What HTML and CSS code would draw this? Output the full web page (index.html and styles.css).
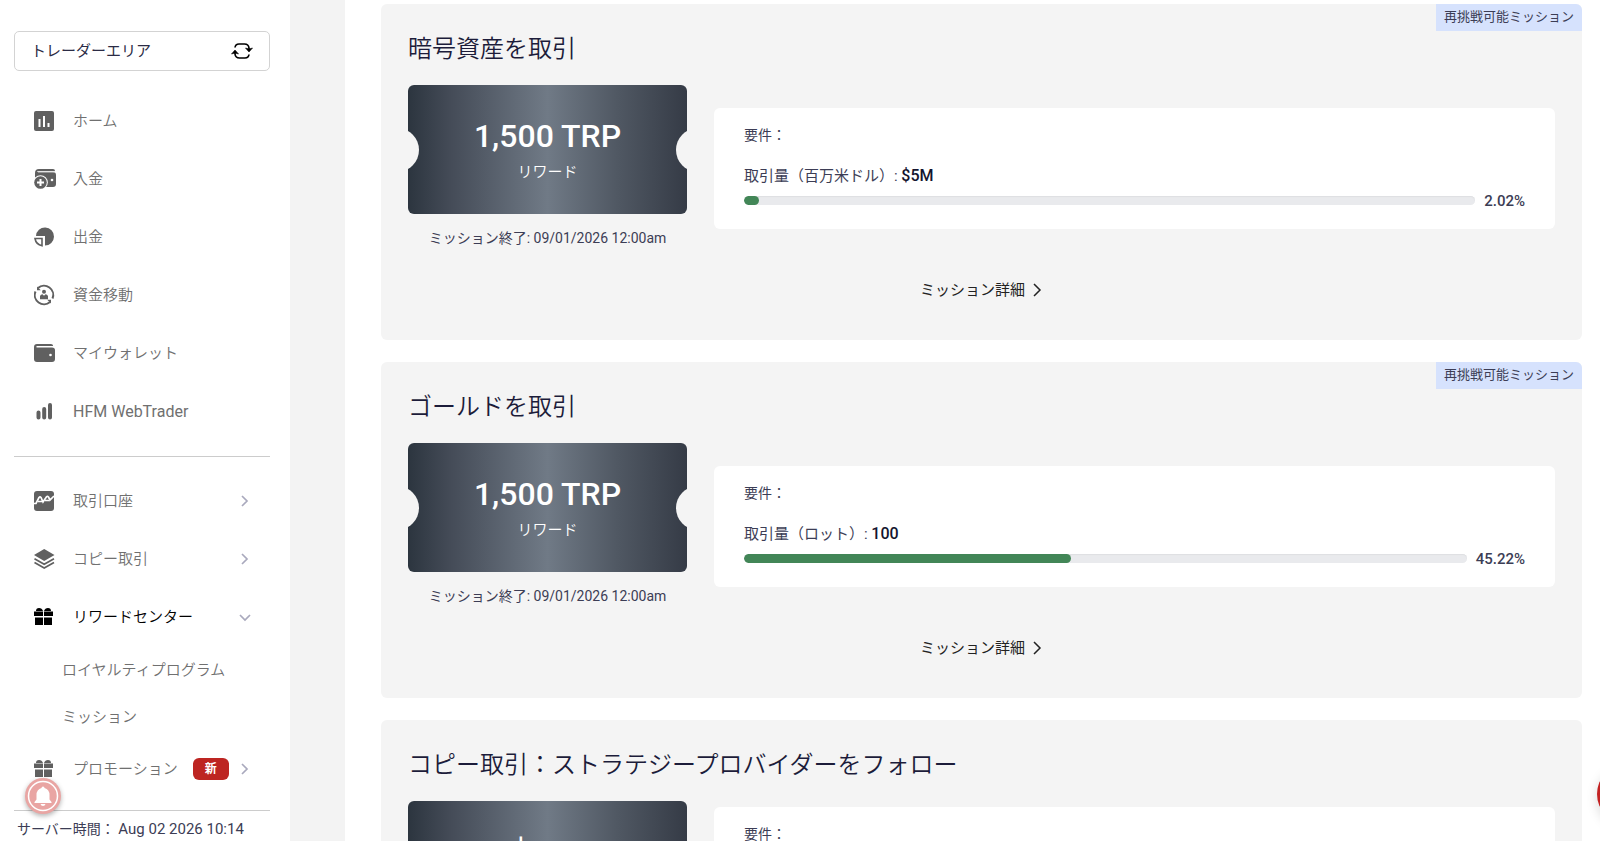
FILE: index.html
```html
<!DOCTYPE html>
<html lang="ja">
<head>
  <meta charset="UTF-8" />
  <meta name="viewport" content="width=device-width, initial-scale=1" />
  <title>ミッション</title>
  <link rel="stylesheet" href="styles.css">
</head>
<body>
  <div class="page">
    <aside class="sidebar">
      <button class="area-switch" type="button">
        <span>トレーダーエリア</span>
        <svg class="switch-icon" viewBox="0 0 22 18">
          <path d="M4 5.500Q4.500 2 8 2H13.500Q17.500 2 18 6V7.500M18 12.500Q17.500 16 14 16H8.500Q4.500 16 4 12V10.500" fill="none" stroke="currentColor" stroke-width="1.700" />
          <path d="M14.500 6L18 7L21.500 6L18 10zM.5 12L4 8L7.500 12L4 11z" fill="currentColor" stroke="currentColor" stroke-width=".6" />
        </svg>
      </button>

      <nav class="menu">
        <a class="menu-item" href="#home">
          <svg class="icon" viewBox="0 0 22 22"><rect x="0" y="1" width="20" height="20" rx="2" fill="currentColor" /><path d="M5.500 9v8M10 6v11M14.500 13v4" stroke="#fff" stroke-width="2" /></svg>
          <span>ホーム</span>
        </a>
        <a class="menu-item" href="#deposit">
          <svg class="icon" viewBox="0 0 22 22"><path d="M1 5q0-4 4-4h14q2 0 2 2H5q-2 0-2 1h16q3 0 3 3v9q0 3-3 3H1z" fill="currentColor" /><path d="M4 4h17" stroke="#ccc" stroke-width="1" /><circle cx="6.500" cy="14.500" r="7.300" fill="#fff" /><circle cx="6.500" cy="14.500" r="6.300" fill="currentColor" /><path d="M6.500 11v7M3 14.500h7" stroke="#fff" stroke-width="2" /><circle cx="18" cy="12" r="1.300" fill="#fff" /></svg>
          <span>入金</span>
        </a>
        <a class="menu-item" href="#withdraw">
          <svg class="icon" viewBox="0 0 22 22"><path d="M2 10A9 9 0 1 1 11 19.500V10z" fill="currentColor" /><path d="M1 12.500h7v7.200Q2 18.500 1 12.500z" fill="#fff" stroke="currentColor" stroke-width="1.600" /></svg>
          <span>出金</span>
        </a>
        <a class="menu-item" href="#transfer">
          <svg class="icon" viewBox="0 0 22 22"><g fill="none" stroke="currentColor" stroke-width="2"><path d="M4 4A9.200 9.200 0 0 1 18.500 14.500" /><path d="M16 18A9.200 9.200 0 0 1 1.500 7.500" /></g><path d="M3 2.500V6.300H6.800zM17 19.500v-3.800h-3.800z" fill="currentColor" /><circle cx="10" cy="7.800" r="2" fill="currentColor" /><path d="M6 15.300V12q.7-1.500 2.500-1.700L10 11.800l1.500-1.500q1.800.2 2.500 1.700v3.300z" fill="currentColor" /></svg>
          <span>資金移動</span>
        </a>
        <a class="menu-item" href="#wallet">
          <svg class="icon" viewBox="0 0 22 22"><path d="M0 5q0-3 3-3h14q2 0 2 1.500v.5H2.500v1.500H18q3 0 3 2.700V17q0 3-3 3H3q-3 0-3-3z" fill="currentColor" /><circle cx="16.500" cy="13" r="1.300" fill="#fff" /></svg>
          <span>マイウォレット</span>
        </a>
        <a class="menu-item" href="#webtrader">
          <svg class="icon" viewBox="0 0 22 22"><path d="M4.500 12.500v5M10.200 9v8.500M16 5v12.500" stroke="currentColor" stroke-width="4" stroke-linecap="round" /></svg>
          <span class="latin">HFM WebTrader</span>
        </a>
      </nav>

      <nav class="menu menu-second">
        <a class="menu-item" href="#accounts">
          <svg class="icon" viewBox="0 0 22 22"><rect x="0" y="1" width="20" height="20" rx="3" fill="currentColor" /><path d="M0 13.500H2L5 7.500Q6 6.300 7 7.500L9 12L12.500 6.800Q13.500 6 14.500 7L16 10L20 6" fill="none" stroke="#fff" stroke-width="1.700" /><path d="M4 11.500h4M11 10.500h4.500" stroke="#fff" stroke-width="1.500" /></svg>
          <span>取引口座</span>
          <svg class="chevron" viewBox="0 0 12 12"><path d="M3 1l5 5l-5 5" /></svg>
        </a>
        <a class="menu-item" href="#copy">
          <svg class="icon" viewBox="0 0 22 22"><path d="M10.200 1L20.500 7L10.200 13L0 7z" fill="currentColor" /><path d="M.5 10.800L10.200 16.300L20 10.800M.5 14.500L10.200 20L20 14.500" fill="none" stroke="currentColor" stroke-width="1.700" /></svg>
          <span>コピー取引</span>
          <svg class="chevron" viewBox="0 0 12 12"><path d="M3 1l5 5l-5 5" /></svg>
        </a>
        <a class="menu-item active" href="#rewards">
          <svg class="icon" viewBox="0 0 22 22" fill="currentColor"><path d="M2 5q0-3 3-3q3 0 4 3zM10 5q1-3 4-3q3 0 3 3zM0 5.500h9v4.500H0zM10 5.500h9V10h-9zM1 11.500h8V19H1zM10 11.500h8V19h-8z" /></svg>
          <span>リワードセンター</span>
          <svg class="chevron" viewBox="0 0 12 12"><path d="M1 4l5 5l5-5" /></svg>
        </a>
        <a class="submenu-item" href="#loyalty">ロイヤルティプログラム</a>
        <a class="submenu-item" href="#missions">ミッション</a>
        <a class="menu-item" href="#promotions">
          <svg class="icon" viewBox="0 0 22 22" fill="currentColor"><path d="M2 5q0-3 3-3q3 0 4 3zM10 5q1-3 4-3q3 0 3 3zM0 5.500h9v4.500H0zM10 5.500h9V10h-9zM1 11.500h8V19H1zM10 11.500h8V19h-8z" /></svg>
          <span>プロモーション</span>
          <em class="new-badge">新</em>
          <svg class="chevron" viewBox="0 0 12 12"><path d="M3 1l5 5l-5 5" /></svg>
        </a>
      </nav>

      <div class="server-time">サーバー時間： <time>Aug 02 2026 10:14</time></div>
    </aside>

    <main class="content">
      <section class="mission">
        <span class="repeat-badge">再挑戦可能ミッション</span>
        <h2>暗号資産を取引</h2>
        <div class="mission-body">
          <div class="reward">
            <div class="ticket">
              <strong>1,500 TRP</strong>
              <span>リワード</span>
            </div>
            <p>ミッション終了: 09/01/2026 12:00am</p>
          </div>
          <div class="requirements">
            <h3>要件：</h3>
            <p>取引量（百万米ドル）: <b>$5M</b></p>
            <div class="progress">
              <div class="track"><div class="fill" style="width: 2.02%"></div></div>
              <span>2.02%</span>
            </div>
          </div>
        </div>
        <a class="details" href="#crypto">ミッション詳細
          <svg viewBox="0 0 10 16"><path d="M1 2l6 6l-6 6" /></svg>
        </a>
      </section>

      <section class="mission">
        <span class="repeat-badge">再挑戦可能ミッション</span>
        <h2>ゴールドを取引</h2>
        <div class="mission-body">
          <div class="reward">
            <div class="ticket">
              <strong>1,500 TRP</strong>
              <span>リワード</span>
            </div>
            <p>ミッション終了: 09/01/2026 12:00am</p>
          </div>
          <div class="requirements">
            <h3>要件：</h3>
            <p>取引量（ロット）: <b>100</b></p>
            <div class="progress">
              <div class="track"><div class="fill" style="width: 45.22%"></div></div>
              <span>45.22%</span>
            </div>
          </div>
        </div>
        <a class="details" href="#gold">ミッション詳細
          <svg viewBox="0 0 10 16"><path d="M1 2l6 6l-6 6" /></svg>
        </a>
      </section>

      <section class="mission">
        <h2>コピー取引：ストラテジープロバイダーをフォロー</h2>
        <div class="mission-body">
          <div class="reward">
            <div class="ticket">
              <strong>$100</strong>
            </div>
          </div>
          <div class="requirements">
            <h3>要件：</h3>
          </div>
        </div>
      </section>
    </main>
  </div>

  <button class="bell" type="button" aria-label="通知">
    <svg viewBox="0 0 36 36">
      <circle cx="18" cy="18" r="14.500" fill="none" stroke="#fff" stroke-width="1.500" />
      <path d="M18 8.500q1.500 0 1.500 1.500q5 1.500 5 7v4.500l2 2.500v1H9.500v-1l2-2.500V17q0-5.500 5-7q0-1.500 1.500-1.500zM15.500 26h5q-.5 2-2.500 2t-2.500-2z" fill="#fff" />
    </svg>
  </button>
  <button class="chat" type="button" aria-label="チャット"></button>
</body>
</html>
```
FILE: styles.css
```css
* {
  box-sizing: border-box;
}

body {
  margin: 0;
  font-family: Roboto, "Noto Sans CJK JP", sans-serif;
  font-size: 15px;
  color: #3c3d55;
  background-color: #f3f3f3;
}

h2, h3, p {
  margin: 0;
  font-weight: 350;
}

a {
  text-decoration: none;
}

button {
  font-family: inherit;
  cursor: pointer;
}

.page {
  display: flex;
  gap: 55px;
  height: 100vh;
  overflow: hidden;
}

/* sidebar */
.sidebar {
  display: flex;
  flex-direction: column;
  flex: 0 0 290px;
  padding: 31px 20px 0 14px;
  background-color: #fff;
}

.area-switch {
  display: flex;
  flex-shrink: 0;
  justify-content: space-between;
  align-items: center;
  height: 40px;
  padding: 0 16px;
  border: 1px solid #d3d3d3;
  border-radius: 5px;
  background-color: #fff;
  font-size: 15px;
  color: #2b2b45;
}

.area-switch span,
.menu-item span {
  padding-bottom: 3px;
}

.switch-icon {
  width: 22px;
  height: 18px;
  color: #000;
}

.menu {
  padding: 21px 0 16px;
}

.menu-second {
  padding: 15px 0 0;
  border-top: 1px solid #ccc;
}

.menu-item {
  display: flex;
  align-items: center;
  height: 58px;
  padding: 0 19px 0 20px;
  font-weight: 350;
  color: #707070;
}

.menu-item .latin {
  padding-bottom: 0;
  font-weight: 400;
  font-size: 16px;
}

.icon {
  width: 22px;
  height: 22px;
  margin-right: 17px;
  color: #606060;
}

.active,
.active .icon {
  color: #000;
}

.chevron {
  width: 12px;
  height: 12px;
  margin-left: auto;
  fill: none;
  stroke: #a9a9bd;
  stroke-width: 1.700;
}

.submenu-item {
  display: flex;
  align-items: center;
  height: 47px;
  padding: 0 0 3px 48px;
  font-weight: 350;
  color: #707070;
}

.new-badge {
  margin-left: 15px;
  padding: 0 12px;
  border-radius: 6px;
  background-color: #bd2522;
  font-size: 12px;
  font-style: normal;
  font-weight: 700;
  line-height: 22px;
  color: #fff;
}

.server-time {
  margin-top: auto;
  padding: 8px 3px 2px;
  border-top: 1px solid #ccc;
  font-size: 14px;
  line-height: 20px;
  white-space: nowrap;
}

.server-time time {
  font-size: 15px;
}

/* missions */
.content {
  flex: 1;
  display: flex;
  flex-direction: column;
  gap: 22px;
  padding: 4px 18px 0 36px;
  background-color: #fff;
}

.mission {
  position: relative;
  flex-shrink: 0;
  display: flex;
  flex-direction: column;
  padding: 27px 27px 38px;
  border-radius: 6px;
  background-color: #f4f4f4;
}

.mission h2 {
  margin-bottom: 18px;
  font-size: 24px;
  line-height: 36px;
  color: #1c1c3a;
}

.repeat-badge {
  position: absolute;
  top: 0;
  right: 0;
  padding: 0 8px 1px;
  border-radius: 0 6px 0 0;
  background-color: #d6e2fd;
  font-size: 13px;
  line-height: 26px;
}

.mission-body {
  display: flex;
  align-items: center;
  gap: 27px;
  min-height: 166px;
}

.reward {
  flex: 0 0 279px;
  align-self: flex-start;
}

.reward p {
  margin-top: 14px;
  font-size: 14px;
  font-weight: 400;
  line-height: 20px;
  text-align: center;
}

.ticket {
  position: relative;
  display: flex;
  flex-direction: column;
  align-items: center;
  height: 129px;
  padding-top: 31px;
  border-radius: 6px;
  overflow: hidden;
  background: linear-gradient(90deg, #2c353f, #444b57 15%, #707a86 50%, #505863 75%, #353b46);
  color: #fff;
}

/* punched holes on both sides */
.ticket::before,
.ticket::after {
  content: "";
  position: absolute;
  top: 43px;
  left: -33px;
  width: 44px;
  height: 44px;
  border-radius: 50%;
  background-color: #f4f4f4;
}

.ticket::after {
  left: auto;
  right: -33px;
}

.ticket strong {
  font-size: 32px;
  font-weight: 500;
  line-height: 40px;
}

.ticket span {
  font-weight: 350;
  line-height: 32px;
}

.requirements {
  flex: 1;
  min-height: 121px;
  padding: 17px 30px 18px;
  border-radius: 6px;
  background-color: #fff;
}

.mission:last-child .requirements {
  min-height: 155px;
}

.requirements h3 {
  font-size: 14px;
  font-weight: 400;
  line-height: 20px;
}

.requirements p {
  margin-top: 20px;
  font-weight: 400;
  line-height: 22px;
}

.requirements b {
  font-size: 16px;
  font-weight: 500;
  color: #14142e;
}

.progress {
  display: flex;
  align-items: center;
  gap: 9px;
  margin-top: 5px;
  font-size: 15px;
  font-weight: 500;
  line-height: 18px;
}

.track {
  flex: 1;
  height: 9px;
  border-radius: 5px;
  background-color: #e9eaed;
  box-shadow: inset 0 1px 1px #dedfe2;
  overflow: hidden;
}

.fill {
  height: 9px;
  border-radius: 5px;
  background-color: #428657;
}

.details {
  display: flex;
  justify-content: center;
  align-items: center;
  gap: 8px;
  margin-top: 27px;
  line-height: 24px;
  color: #222;
}

.details svg {
  width: 10px;
  height: 16px;
  fill: none;
  stroke: currentColor;
  stroke-width: 1.500;
}

/* floating buttons */
.bell,
.chat {
  position: fixed;
  padding: 0;
  border: none;
  border-radius: 50%;
}

.bell {
  left: 25px;
  bottom: 27px;
  width: 36px;
  height: 36px;
  background-color: #e9a5a3;
  box-shadow: 0 2px 5px rgba(0, 0, 0, 0.3);
}

.bell svg {
  display: block;
}

.chat {
  right: -57px;
  bottom: 17px;
  width: 60px;
  height: 60px;
  background-color: #c32222;
  box-shadow: 0 4px 12px rgba(0, 0, 0, 0.15);
}
```
